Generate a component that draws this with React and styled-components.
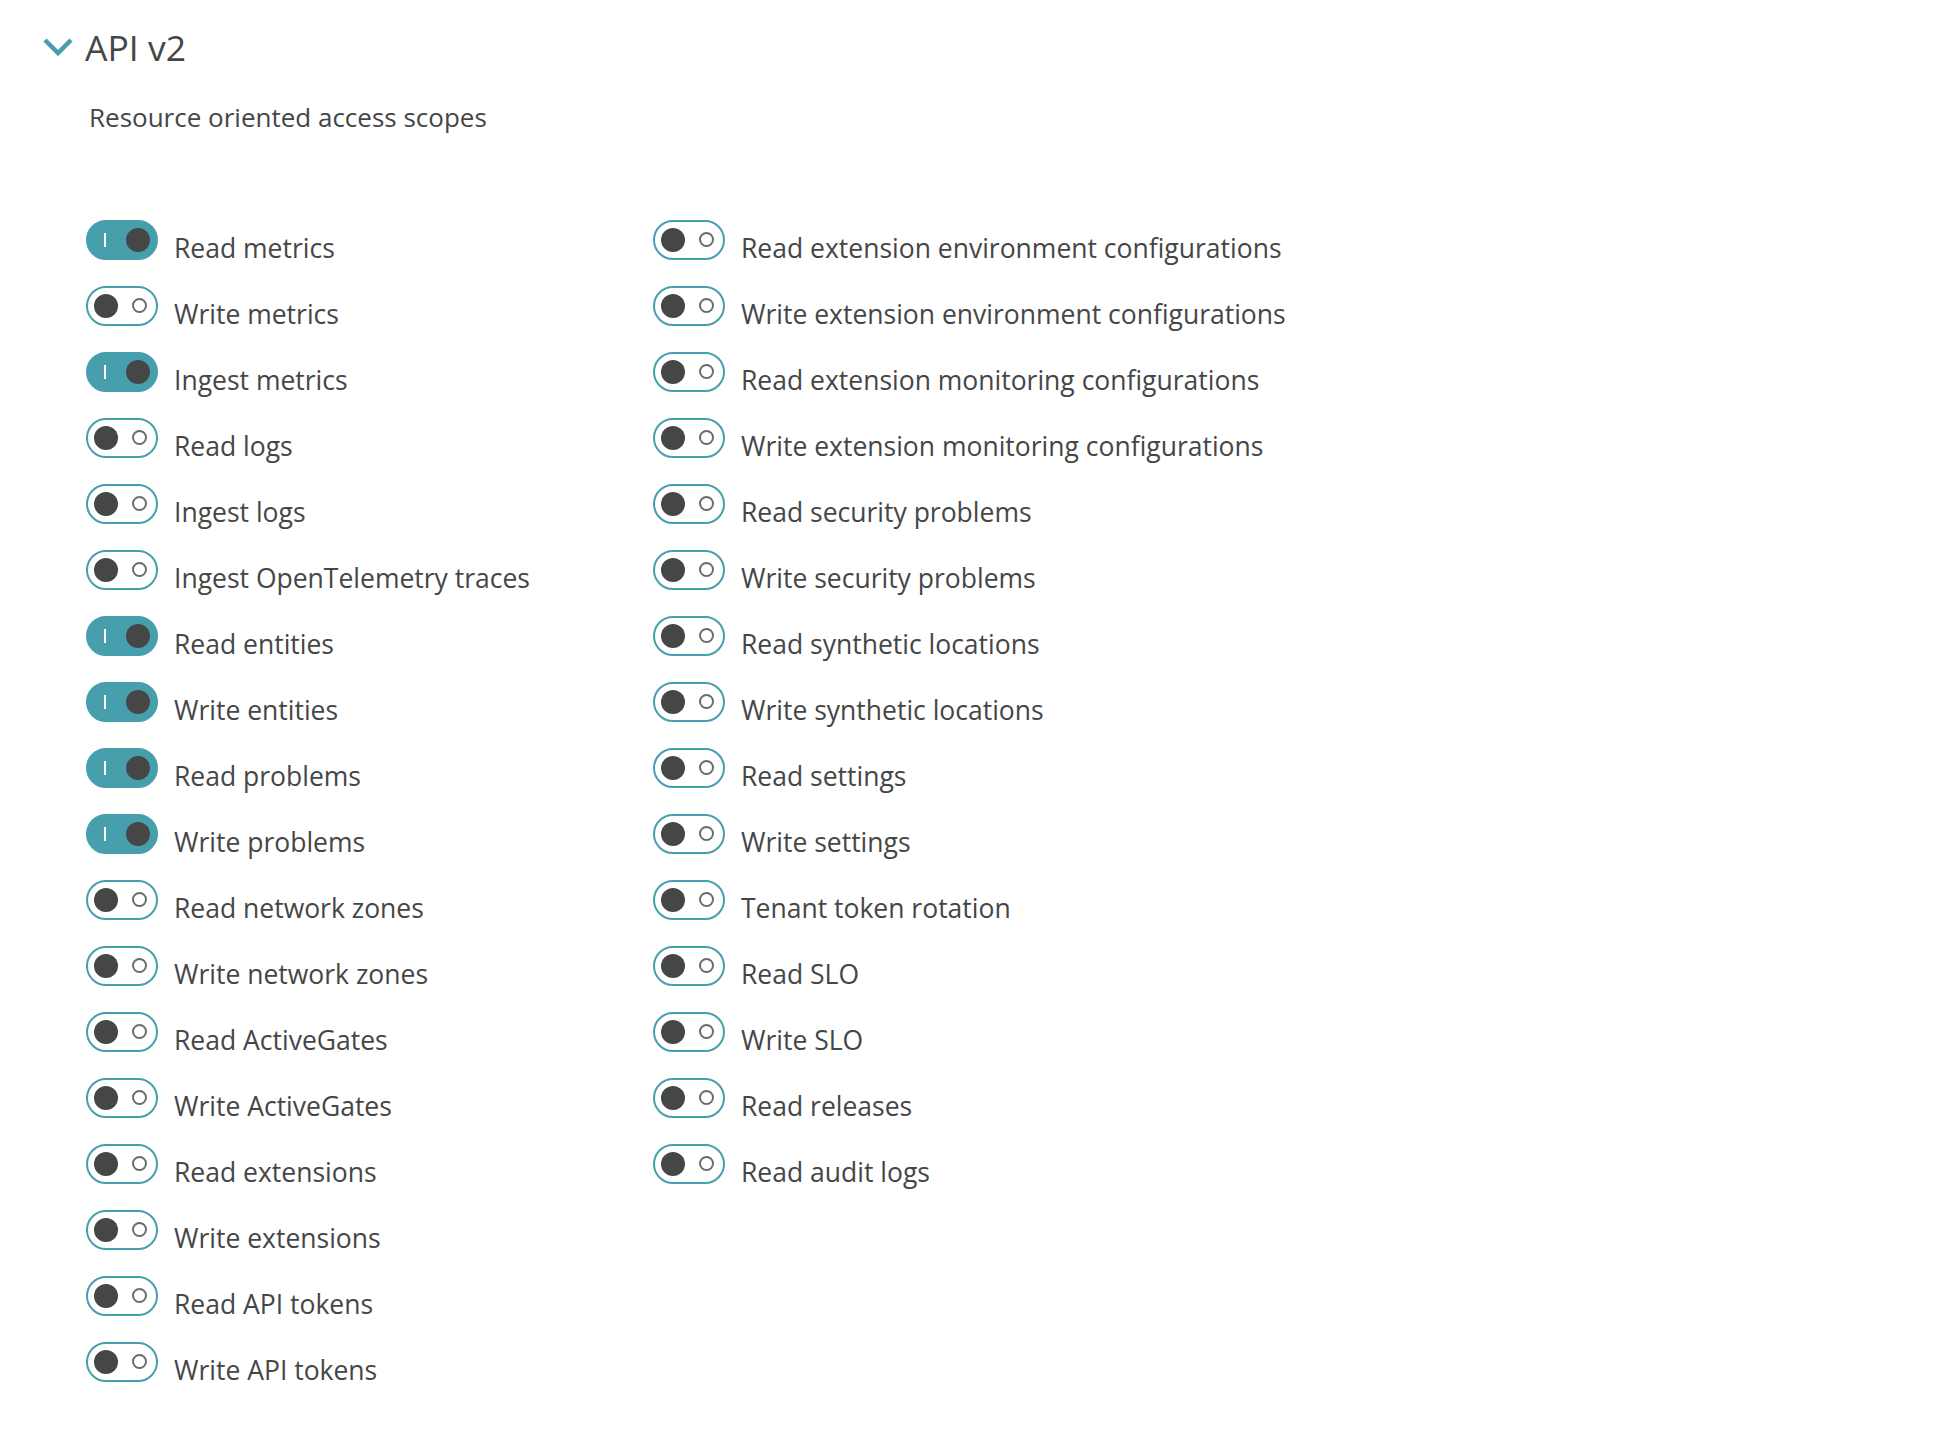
import React from 'react'
import styled, { createGlobalStyle } from 'styled-components'

const GlobalStyle = createGlobalStyle`
  body {
    margin: 0;
    background: #fff;
    font-family: 'Open Sans', 'Noto Sans', sans-serif;
    color: #454646;
  }
`

const Page = styled.div`
  padding: 24px 0 40px 43px;
`

const Header = styled.div`
  display: flex;
  align-items: center;
  gap: 12px;
  height: 46px;
`

const Title = styled.h2`
  margin: 0;
  font-size: 35.5px;
  font-weight: 400;
  line-height: 46px;
`

const Subtitle = styled.p`
  margin: 31px 0 0 46px;
  font-size: 26px;
  line-height: 32px;
`

const Grid = styled.div`
  display: grid;
  grid-template-columns: 567px auto;
  margin: 82px 0 0 43px;
`

const Column = styled.div`
  display: flex;
  flex-direction: column;
`

const Row = styled.label`
  display: flex;
  align-items: center;
  gap: 16px;
  height: 66px;
  font-size: 26.5px;
  white-space: nowrap;
  cursor: pointer;
`

const Toggle = styled.span`
  position: relative;
  flex: none;
  box-sizing: border-box;
  width: 72px;
  height: 40px;
  margin-bottom: 16px;
  border-radius: 20px;
  border: 2px solid #479fae;
  background: ${p => (p.on ? '#479fae' : '#fff')};
`

const Knob = styled.span`
  position: absolute;
  top: 6px;
  left: ${p => (p.on ? '38px' : '6px')};
  width: 24px;
  height: 24px;
  border-radius: 50%;
  background: #454646;
`

const Mark = styled.span`
  position: absolute;
  box-sizing: border-box;
  ${p =>
    p.on
      ? `
    top: 11px;
    left: 16px;
    width: 2px;
    height: 14px;
    background: #fff;
  `
      : `
    top: 10px;
    left: 44px;
    width: 15px;
    height: 15px;
    border-radius: 50%;
    border: 2px solid #6b6b6b;
  `}
`

const Chevron = () => (
  <svg width="30" height="20" viewBox="0 0 30 20">
    <path d="M2 3 L15 16 L28 3" fill="none" stroke="#479fae" strokeWidth="4.5" />
  </svg>
)

const left = [
  ['Read metrics', true],
  ['Write metrics', false],
  ['Ingest metrics', true],
  ['Read logs', false],
  ['Ingest logs', false],
  ['Ingest OpenTelemetry traces', false],
  ['Read entities', true],
  ['Write entities', true],
  ['Read problems', true],
  ['Write problems', true],
  ['Read network zones', false],
  ['Write network zones', false],
  ['Read ActiveGates', false],
  ['Write ActiveGates', false],
  ['Read extensions', false],
  ['Write extensions', false],
  ['Read API tokens', false],
  ['Write API tokens', false],
]

const right = [
  'Read extension environment configurations',
  'Write extension environment configurations',
  'Read extension monitoring configurations',
  'Write extension monitoring configurations',
  'Read security problems',
  'Write security problems',
  'Read synthetic locations',
  'Write synthetic locations',
  'Read settings',
  'Write settings',
  'Tenant token rotation',
  'Read SLO',
  'Write SLO',
  'Read releases',
  'Read audit logs',
].map(n => [n, false])

const Scope = ({ name, on }) => (
  <Row>
    <Toggle on={on}>
      <Mark on={on} />
      <Knob on={on} />
    </Toggle>
    {name}
  </Row>
)

export default function App() {
  return (
    <Page>
      <GlobalStyle />
      <Header>
        <Chevron />
        <Title>API v2</Title>
      </Header>
      <Subtitle>Resource oriented access scopes</Subtitle>
      <Grid>
        <Column>
          {left.map(([n, on]) => <Scope key={n} name={n} on={on} />)}
        </Column>
        <Column>
          {right.map(([n, on]) => <Scope key={n} name={n} on={on} />)}
        </Column>
      </Grid>
    </Page>
  )
}
